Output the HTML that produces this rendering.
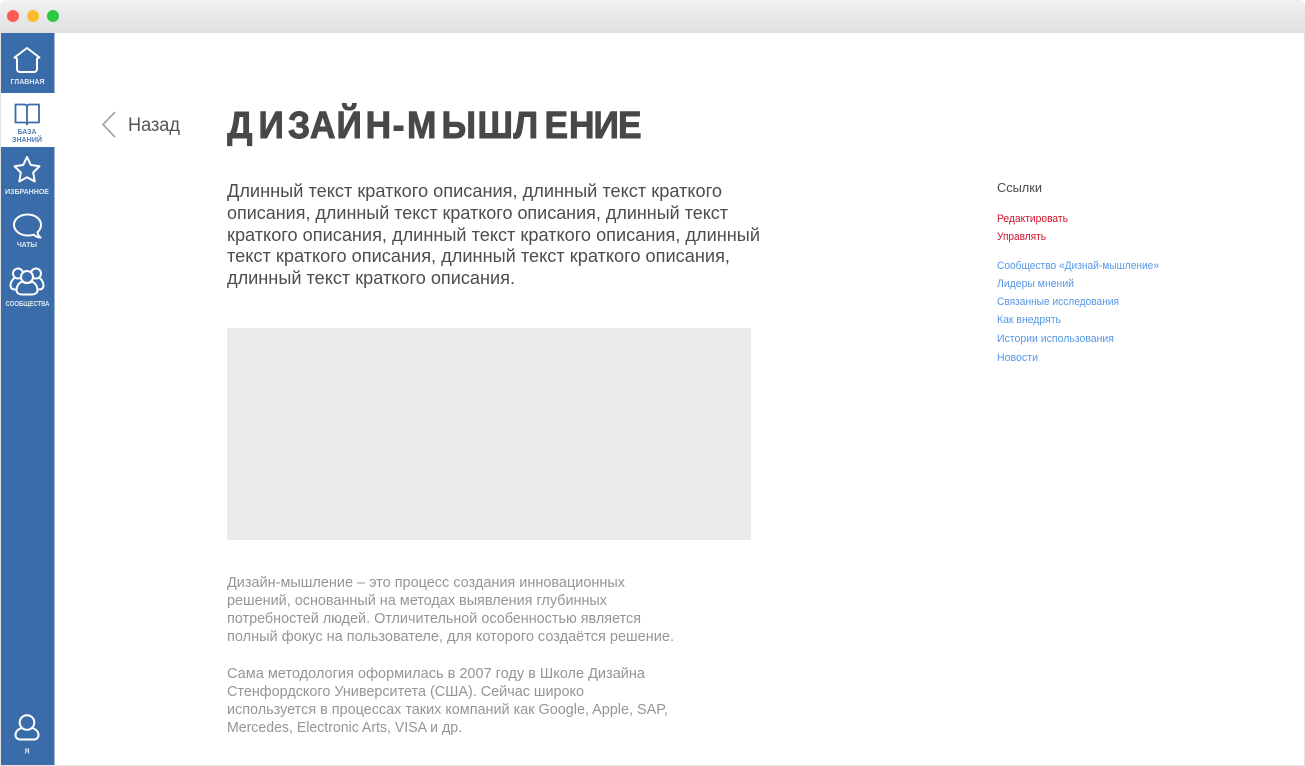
<!DOCTYPE html>
<html><head><meta charset="utf-8"><style>
html,body{margin:0;padding:0;background:#fff;width:1305px;height:766px;overflow:hidden}
svg{display:block;font-family:"Liberation Sans",sans-serif}
.lead{font-size:18px;fill:#4d4d4d}
.body{font-size:15px;fill:#959595}
.red{font-size:11px;fill:#d0112b}
.blue{font-size:11px;fill:#5596e6}
.nav{font-size:7px;font-weight:bold;fill:#dfe8f2;text-anchor:middle}
.ic{fill:none;stroke:#fff;stroke-width:2;stroke-linejoin:round;stroke-linecap:round}
</style></head><body>
<svg width="1305" height="766" viewBox="0 0 1305 766" xmlns="http://www.w3.org/2000/svg">
<defs><linearGradient id="tb" x1="0" y1="0" x2="0" y2="1"><stop offset="0" stop-color="#f1f1f1"/><stop offset="1" stop-color="#e1e0e1"/></linearGradient></defs>
<path d="M0.5 766V6a6 6 0 0 1 6-6H1298a6 6 0 0 1 6.500 6V766Z" fill="#fff"/>
<path d="M0 33V6a6 6 0 0 1 6-6H1299a6 6 0 0 1 6 6V33Z" fill="url(#tb)"/>
<rect x="1304" y="33" width="1" height="733" fill="#e2e2e2"/>
<rect x="0" y="765" width="1305" height="1" fill="#e6e6e6"/>
<rect x="0" y="33" width="1" height="733" fill="#e2e2e2"/>
<circle cx="13" cy="16" r="6" fill="#fc5b57"/><circle cx="33" cy="16" r="6" fill="#fdbc2e"/><circle cx="53" cy="16" r="6" fill="#2cc840"/>

<rect x="1" y="33" width="53.500" height="60" fill="#3a6ca9"/>
<rect x="1" y="147" width="53.500" height="618" fill="#3a6ca9"/>

<path class="ic" d="M14.500 57.500 27 48 39.500 57.500 37 58.500V69a3 3 0 0 1-3 3H20a3 3 0 0 1-3-3V58.500Z"/>
<text class="nav" x="27.500" y="84" textLength="34" lengthAdjust="spacingAndGlyphs">ГЛАВНАЯ</text>

<path d="M15.500 104.500H24.500Q27 104.500 27 107Q27 104.500 29.500 104.500H39V122.500H29.500Q27 122.500 27 124.500Q27 122.500 24.500 122.500H15.500ZM27 107V124" fill="none" stroke="#3a6ca9" stroke-width="1.800" stroke-linejoin="round"/>
<text class="nav" style="fill:#4f7db3" x="27" y="134" textLength="19" lengthAdjust="spacingAndGlyphs">БАЗА</text>
<text class="nav" style="fill:#4f7db3" x="27" y="142" textLength="30" lengthAdjust="spacingAndGlyphs">ЗНАНИЙ</text>

<path class="ic" d="M27 157 30.800 165 39.500 166.300 33.200 172.500 34.700 181.500 27 177.300 19.300 181.500 20.800 172.500 14.500 166.300 23.200 165Z"/>
<text class="nav" x="27" y="194" textLength="44" lengthAdjust="spacingAndGlyphs">ИЗБРАННОЕ</text>

<path class="ic" d="M27.500 214.500C35 214.500 41 219 41 224.800C41 228 39.500 230.500 37.500 232.300C37.800 234.500 38.800 236.500 40.500 237.500C38 237.500 35.500 236.500 33.800 234.700C32 235.200 29.800 235.500 27.500 235.500C20 235.500 14 230.800 14 224.800C14 219 20 214.500 27.500 214.500Z"/>
<text class="nav" x="27" y="247" textLength="20" lengthAdjust="spacingAndGlyphs">ЧАТЫ</text>

<g class="ic">
<circle cx="18" cy="273.500" r="5"/><circle cx="36" cy="273.500" r="5"/>
<path d="M14.500 278C12 279.500 10.500 283 10.500 285.500C10.500 288 12 289.500 15.500 289.500"/>
<path d="M39.500 278C42 279.500 43.500 283 43.500 285.500C43.500 288 42 289.500 38.500 289.500"/>
<circle cx="27" cy="277" r="6" fill="#3a6ca9"/>
<path d="M22 281.500C18.500 283 16.500 286.500 16.500 290C16.500 293 19 294.500 22 294.500H32C35 294.500 37.500 293 37.500 290C37.500 286.500 35.500 283 32 281.500C29 283.500 25 283.500 22 281.500Z" fill="#3a6ca9"/>
</g>
<text class="nav" x="27.500" y="306" textLength="44" lengthAdjust="spacingAndGlyphs">СООБЩЕСТВА</text>

<circle class="ic" cx="27" cy="722.500" r="7.300"/>
<path class="ic" d="M21.500 728C17.500 729.500 15.500 732 15.500 735A4.500 4.500 0 0 0 20 739.500H34A4.500 4.500 0 0 0 38.500 735C38.500 732 36.500 729.500 32.500 728"/>
<text class="nav" x="27" y="753.500">Я</text>

<path d="M115 112 103 124.500 115 137" fill="none" stroke="#9a9a9a" stroke-width="1.500"/>
<text x="128" y="131" font-size="19" fill="#555" textLength="52" lengthAdjust="spacingAndGlyphs">Назад</text>
<text transform="scale(0.93,1)" y="138" font-size="38" font-weight="bold" fill="#484848" stroke="#484848" stroke-width="1" x="244.400 278 309.700 333.400 361.900 393.100 422.200 437.600 474.800 513.500 552 585.500 611.800 638.200 664.500">ДИЗАЙН-МЫШЛЕНИЕ</text>

<text class="lead" x="227" y="197" textLength="495" lengthAdjust="spacingAndGlyphs">Длинный текст краткого описания, длинный текст краткого</text>
<text class="lead" x="227" y="219" textLength="501" lengthAdjust="spacingAndGlyphs">описания, длинный текст краткого описания, длинный текст</text>
<text class="lead" x="227" y="241" textLength="533" lengthAdjust="spacingAndGlyphs">краткого описания, длинный текст краткого описания, длинный</text>
<text class="lead" x="227" y="262" textLength="503" lengthAdjust="spacingAndGlyphs">текст краткого описания, длинный текст краткого описания,</text>
<text class="lead" x="227" y="284" textLength="288" lengthAdjust="spacingAndGlyphs">длинный текст краткого описания.</text>

<rect x="227" y="328" width="524" height="212" fill="#ebebeb"/>

<text class="body" x="227" y="587" textLength="398" lengthAdjust="spacingAndGlyphs">Дизайн-мышление – это процесс создания инновационных</text>
<text class="body" x="227" y="605" textLength="380" lengthAdjust="spacingAndGlyphs">решений, основанный на методах выявления глубинных</text>
<text class="body" x="227" y="623" textLength="414" lengthAdjust="spacingAndGlyphs">потребностей людей. Отличительной особенностью является</text>
<text class="body" x="227" y="641" textLength="447" lengthAdjust="spacingAndGlyphs">полный фокус на пользователе, для которого создаётся решение.</text>
<text class="body" x="227" y="678" textLength="418" lengthAdjust="spacingAndGlyphs">Сама методология оформилась в 2007 году в Школе Дизайна</text>
<text class="body" x="227" y="696" textLength="357" lengthAdjust="spacingAndGlyphs">Стенфордского Университета (США). Сейчас широко</text>
<text class="body" x="227" y="714" textLength="441" lengthAdjust="spacingAndGlyphs">используется в процессах таких компаний как Google, Apple, SAP,</text>
<text class="body" x="227" y="732" textLength="235" lengthAdjust="spacingAndGlyphs">Mercedes, Electronic Arts, VISA и др.</text>

<text x="997" y="192" font-size="13" fill="#4a4a4a" textLength="45" lengthAdjust="spacingAndGlyphs">Ссылки</text>
<text class="red" x="997" y="222" textLength="71" lengthAdjust="spacingAndGlyphs">Редактировать</text>
<text class="red" x="997" y="240" textLength="49" lengthAdjust="spacingAndGlyphs">Управлять</text>
<text class="blue" x="997" y="269" textLength="162" lengthAdjust="spacingAndGlyphs">Сообщество «Дизнай-мышление»</text>
<text class="blue" x="997" y="287" textLength="77" lengthAdjust="spacingAndGlyphs">Лидеры мнений</text>
<text class="blue" x="997" y="305" textLength="122" lengthAdjust="spacingAndGlyphs">Связанные исследования</text>
<text class="blue" x="997" y="323" textLength="64" lengthAdjust="spacingAndGlyphs">Как внедрять</text>
<text class="blue" x="997" y="342" textLength="117" lengthAdjust="spacingAndGlyphs">Истории использования</text>
<text class="blue" x="997" y="361" textLength="41" lengthAdjust="spacingAndGlyphs">Новости</text>
</svg>
</body></html>
